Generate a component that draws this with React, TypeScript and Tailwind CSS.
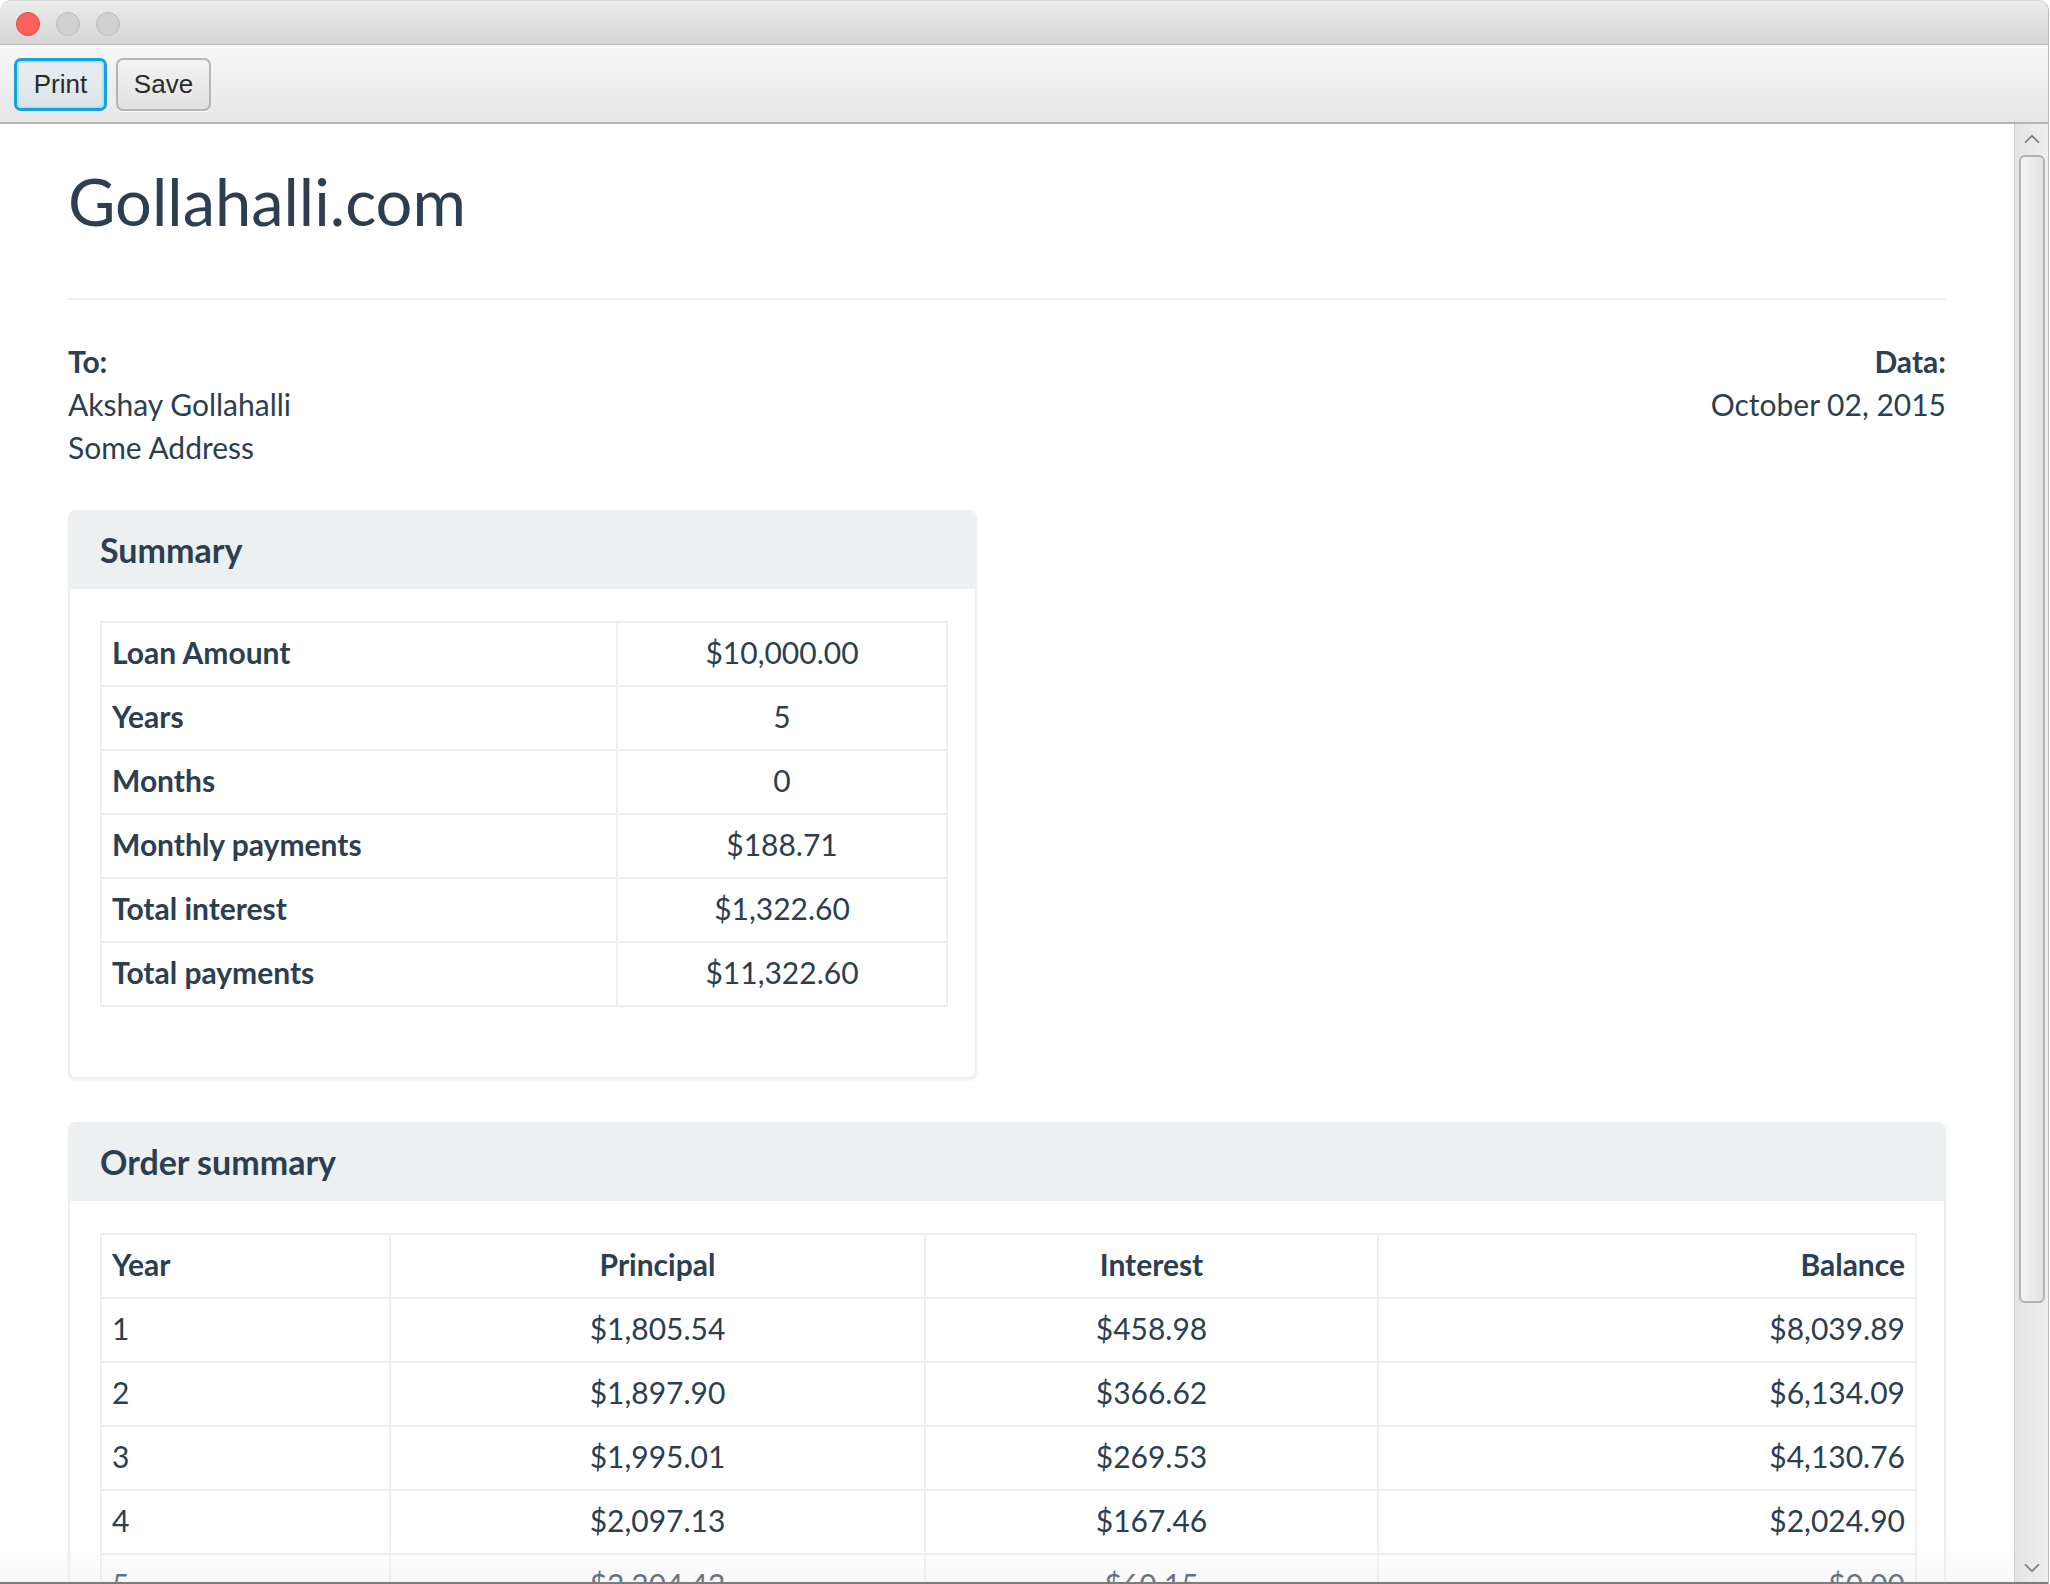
import { ChevronUp, ChevronDown } from "lucide-react";

const summaryRows = [
  { label: "Loan Amount", value: "$10,000.00" },
  { label: "Years", value: "5" },
  { label: "Months", value: "0" },
  { label: "Monthly payments", value: "$188.71" },
  { label: "Total interest", value: "$1,322.60" },
  { label: "Total payments", value: "$11,322.60" },
];

const yearRows = [
  { year: "1", principal: "$1,805.54", interest: "$458.98", balance: "$8,039.89" },
  { year: "2", principal: "$1,897.90", interest: "$366.62", balance: "$6,134.09" },
  { year: "3", principal: "$1,995.01", interest: "$269.53", balance: "$4,130.76" },
  { year: "4", principal: "$2,097.13", interest: "$167.46", balance: "$2,024.90" },
  { year: "5", principal: "$2,204.42", interest: "$60.15", balance: "$0.00" },
];

const cell = "border-2 border-[#ecf0f1] h-[64px] px-[10px] pt-0 pb-[3px] align-middle";

const Panel = ({ title, className, children }: { title: string; className?: string; children: React.ReactNode }) => (
  <div className={`border-2 border-[#ecf0f1] rounded-[8px] shadow-[0_2px_2px_rgba(0,0,0,0.05)] bg-white ${className ?? ""}`}>
    <div className="h-[77px] bg-[#ecf0f1] rounded-t-[6px] px-[30px] pb-[3px] flex items-center">
      <h3 className="text-[34px] leading-[37px] font-bold">{title}</h3>
    </div>
    <div className="pt-[32px] pl-[30px] pr-[27px] pb-[70px]">{children}</div>
  </div>
);

const App = () => {
  return (
    <div className="w-[2050px] h-[1584px] bg-white overflow-hidden">
      <div className="w-[2049px] h-[1584px] flex flex-col border-r border-[#bcbcbc] rounded-t-[10px] overflow-hidden relative">
        {/* title bar */}
        <div className="h-[45px] shrink-0 bg-gradient-to-b from-[#ececec] to-[#d5d5d5] border-b border-[#b4b4b4] border-t border-t-[#d8d8d8] rounded-t-[10px] flex items-center gap-[16px] pl-[16px] pt-[2px]">
          <span className="w-[24px] h-[24px] rounded-full bg-[#fc605b] border border-[#de4842]"></span>
          <span className="w-[24px] h-[24px] rounded-full bg-[#d1d1d1] border border-[#bdbdbd]"></span>
          <span className="w-[24px] h-[24px] rounded-full bg-[#d1d1d1] border border-[#bdbdbd]"></span>
        </div>
        {/* toolbar */}
        <div className="h-[79px] shrink-0 bg-gradient-to-b from-[#f7f7f7] to-[#e7e7e7] border-b-2 border-[#b5b5b5] flex items-start gap-[9px] pl-[14px] pt-[13px] font-['Liberation_Sans',Arial,sans-serif] text-[26px] text-[#2a2a2a]">
          <button className="w-[93px] h-[53px] rounded-[7px] border-[3px] border-[#17a0da] bg-gradient-to-b from-[#e9eef1] to-[#dce3e8] shadow-[inset_0_0_0_2px_#b9dcef]">
            Print
          </button>
          <button className="w-[95px] h-[53px] rounded-[7px] border-2 border-[#b4b4b4] bg-gradient-to-b from-[#f3f3f3] to-[#e1e1e1] shadow-[0_1px_0_#ffffff]">
            Save
          </button>
        </div>
        {/* body */}
        <div className="flex-1 flex min-h-0">
          <div className="w-[2014px] shrink-0 overflow-hidden relative px-[68px] font-['Lato',sans-serif] text-[#2c3e50] text-[30px] leading-[43px]">
            <h1 className="mt-[40px] text-[65px] leading-[75px] font-normal">Gollahalli.com</h1>
            <div className="mt-[59px] h-[2px] bg-[#ecf0f1]"></div>
            <div className="mt-[40px] flex justify-between">
              <div>
                <div className="font-bold">To:</div>
                <div>Akshay Gollahalli</div>
                <div>Some Address</div>
              </div>
              <div className="text-right">
                <div className="font-bold">Data:</div>
                <div>October 02, 2015</div>
              </div>
            </div>

            <Panel title="Summary" className="mt-[41px] w-[909px]">
              <table className="w-full border-collapse">
                <colgroup>
                  <col className="w-[516px]" />
                  <col />
                </colgroup>
                <tbody>
                  {summaryRows.map((row) => (
                    <tr key={row.label}>
                      <td className={`${cell} font-bold text-left`}>{row.label}</td>
                      <td className={`${cell} text-center`}>{row.value}</td>
                    </tr>
                  ))}
                </tbody>
              </table>
            </Panel>

            <Panel title="Order summary" className="mt-[43px]">
              <table className="w-full border-collapse">
                <colgroup>
                  <col className="w-[289px]" />
                  <col className="w-[535px]" />
                  <col className="w-[453px]" />
                  <col />
                </colgroup>
                <thead>
                  <tr>
                    <th className={`${cell} font-bold text-left`}>Year</th>
                    <th className={`${cell} font-bold text-center`}>Principal</th>
                    <th className={`${cell} font-bold text-center`}>Interest</th>
                    <th className={`${cell} font-bold text-right`}>Balance</th>
                  </tr>
                </thead>
                <tbody>
                  {yearRows.map((row) => (
                    <tr key={row.year}>
                      <td className={`${cell} text-left`}>{row.year}</td>
                      <td className={`${cell} text-center`}>{row.principal}</td>
                      <td className={`${cell} text-center`}>{row.interest}</td>
                      <td className={`${cell} text-right`}>{row.balance}</td>
                    </tr>
                  ))}
                </tbody>
              </table>
            </Panel>
            <div className="pointer-events-none absolute left-0 right-0 bottom-0 h-[40px] bg-gradient-to-b from-[rgba(240,240,240,0)] to-[rgba(236,236,236,0.35)]"></div>
          </div>
          {/* scrollbar */}
          <div className="w-[34px] shrink-0 border-l border-[#cfcfcf] bg-gradient-to-r from-[#e4e4e4] to-[#efefef] flex flex-col items-center">
            <ChevronUp className="mt-[2px] w-[26px] h-[26px] text-[#777777]" strokeWidth={1.6} />
            <div className="mt-[3px] w-[26px] h-[1148px] rounded-[6px] border-2 border-[#b3b3b3] bg-gradient-to-r from-[#f4f4f4] to-[#e2e2e2]"></div>
            <div className="flex-1"></div>
            <ChevronDown className="mb-[1px] w-[26px] h-[26px] text-[#777777]" strokeWidth={1.6} />
          </div>
        </div>
        <div className="h-[2px] shrink-0 bg-[#7c7c7c]"></div>
      </div>
    </div>
  );
};

export default App;
